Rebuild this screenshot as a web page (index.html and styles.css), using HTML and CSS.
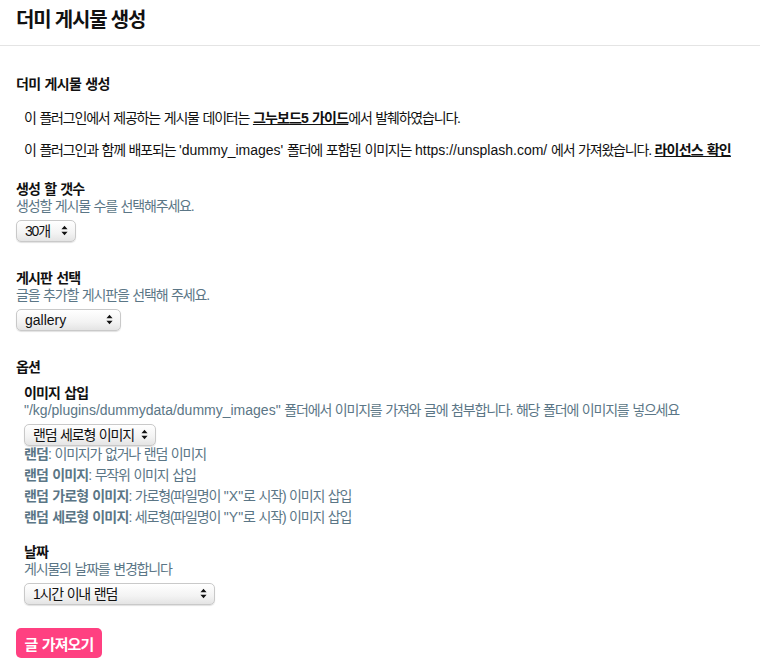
FILE: index.html
```html
<!DOCTYPE html>
<html lang="ko">
<head>
<meta charset="utf-8">
<title>더미 게시물 생성</title>
<link rel="stylesheet" href="styles.css">
</head>
<body>
<header class="topbar"><h1 class="topbar-title">더미 게시물 생성</h1></header>
<main class="content">
  <h2 class="section-title">더미 게시물 생성</h2>
  <p class="intro">이 플러그인에서 제공하는 게시물 데이터는 <a class="strong-link" href="#">그누보드5 가이드</a>에서 발췌하였습니다.</p>
  <p class="intro intro-2">이 플러그인과 함께 배포되는 <span class="en">'dummy_images'</span> 폴더에 포함된 이미지는 <span class="en">https://unsplash.com/</span> 에서 가져왔습니다. <a class="strong-link" href="#">라이선스 확인</a></p>

  <div class="field field-first">
    <div class="label">생성 할 갯수</div>
    <div class="desc">생성할 게시물 수를 선택해주세요.</div>
    <div class="select w-count"><span>30개</span><svg class="arrows" viewBox="0 0 8 12" width="7" height="11"><path d="M4 0.5 L7.5 4.5 H0.5 Z M4 11.5 L7.5 7.5 H0.5 Z" fill="#111"/></svg></div>
  </div>

  <div class="field">
    <div class="label">게시판 선택</div>
    <div class="desc">글을 추가할 게시판을 선택해 주세요.</div>
    <div class="select w-board"><span class="en">gallery</span><svg class="arrows" viewBox="0 0 8 12" width="7" height="11"><path d="M4 0.5 L7.5 4.5 H0.5 Z M4 11.5 L7.5 7.5 H0.5 Z" fill="#111"/></svg></div>
  </div>

  <div class="field">
    <div class="label">옵션</div>
    <div class="sub">
      <div class="sub-field">
        <div class="label">이미지 삽입</div>
        <div class="desc"><span class="en">"/kg/plugins/dummydata/dummy_images"</span> 폴더에서 이미지를 가져와 글에 첨부합니다. 해당 폴더에 이미지를 넣으세요</div>
        <div class="select w-image"><span>랜덤 세로형 이미지</span><svg class="arrows" viewBox="0 0 8 12" width="7" height="11"><path d="M4 0.5 L7.5 4.5 H0.5 Z M4 11.5 L7.5 7.5 H0.5 Z" fill="#111"/></svg></div>
        <ul class="notes">
          <li><b>랜덤</b>: 이미지가 없거나 랜덤 이미지</li>
          <li><b>랜덤 이미지</b>: 무작위 이미지 삽입</li>
          <li><b>랜덤 가로형 이미지</b>: 가로형(파일명이 <span class="en">"X"</span>로 시작) 이미지 삽입</li>
          <li><b>랜덤 세로형 이미지</b>: 세로형(파일명이 <span class="en">"Y"</span>로 시작) 이미지 삽입</li>
        </ul>
      </div>
      <div class="sub-field sub-date">
        <div class="label">날짜</div>
        <div class="desc">게시물의 날짜를 변경합니다</div>
        <div class="select w-date"><span>1시간 이내 랜덤</span><svg class="arrows" viewBox="0 0 8 12" width="7" height="11"><path d="M4 0.5 L7.5 4.5 H0.5 Z M4 11.5 L7.5 7.5 H0.5 Z" fill="#111"/></svg></div>
      </div>
    </div>
  </div>

  <button class="btn-submit" type="button">글 가져오기</button>
</main>
</body>
</html>
```

FILE: styles.css
```css
* { box-sizing: border-box; }
body {
  margin: 0;
  font-family: "Liberation Sans", "Noto Sans CJK KR", sans-serif;
  color: #111;
  font-size: 14px;
  letter-spacing: -0.085em;
  word-spacing: 1px;
  background: #fff;
}
.en { letter-spacing: 0; }
.topbar {
  height: 46px;
  border-bottom: 1px solid #e4e4e4;
  padding: 0 16px;
  display: flex;
  align-items: flex-start;
}
.topbar-title {
  margin: 8px 0 0;
  font-size: 20px;
  line-height: 24px;
  font-weight: 700;
  letter-spacing: -0.06em;
  word-spacing: 0;
  color: #111;
}
.content {
  padding: 0 16px;
}
.section-title {
  margin: 28px 0 0;
  font-size: 14px;
  line-height: 20px;
  font-weight: 700;
  letter-spacing: -0.05em;
}
.intro {
  margin: 14px 0 0;
  padding-left: 8px;
  line-height: 20px;
}
.intro-2 { margin-top: 12px; }
.strong-link {
  color: #111;
  font-weight: 700;
  text-decoration: underline;
  letter-spacing: -0.06em;
}
.field { margin-top: 28px; }
.field-first { margin-top: 21px; }
.label {
  font-weight: 700;
  line-height: 17px;
  letter-spacing: -0.06em;
}
.desc {
  color: #5b7686;
  line-height: 17px;
}
.select {
  position: relative;
  display: flex;
  align-items: center;
  height: 22px;
  margin-top: 5px;
  padding-left: 8px;
  border: 1px solid #c9c9c9;
  border-radius: 5px;
  background: linear-gradient(#ffffff, #f3f3f3 60%, #e4e4e4);
  box-shadow: 0 1px 1px rgba(0,0,0,0.12);
  font-size: 14px;
  line-height: 17px;
  color: #111;
}
.arrows {
  position: absolute;
  right: 7px;
  top: 4px;
}
.w-count { width: 60px; }
.w-board { width: 105px; }
.w-image { width: 132px; }
.w-date { width: 191px; }
.sub {
  padding-left: 8px;
  margin-top: 9px;
}
.sub-field .select { margin-top: 5px; }
.notes {
  list-style: none;
  margin: 0;
  padding: 0;
  color: #5b7686;
}
.notes li {
  line-height: 17px;
  margin-top: 4px;
}
.notes li:first-child { margin-top: 0; }
.notes b { font-weight: 700; letter-spacing: -0.06em; }
.sub-date { margin-top: 18px; }
.btn-submit {
  margin-top: 23px;
  width: 86px;
  height: 30px;
  border: 0;
  border-radius: 5px;
  background: #ff4081;
  color: #fff;
  font-family: "Liberation Sans", "Noto Sans CJK KR", sans-serif;
  font-size: 15px;
  font-weight: 700;
  letter-spacing: -0.06em;
  word-spacing: 1px;
  padding: 0;
}
```
